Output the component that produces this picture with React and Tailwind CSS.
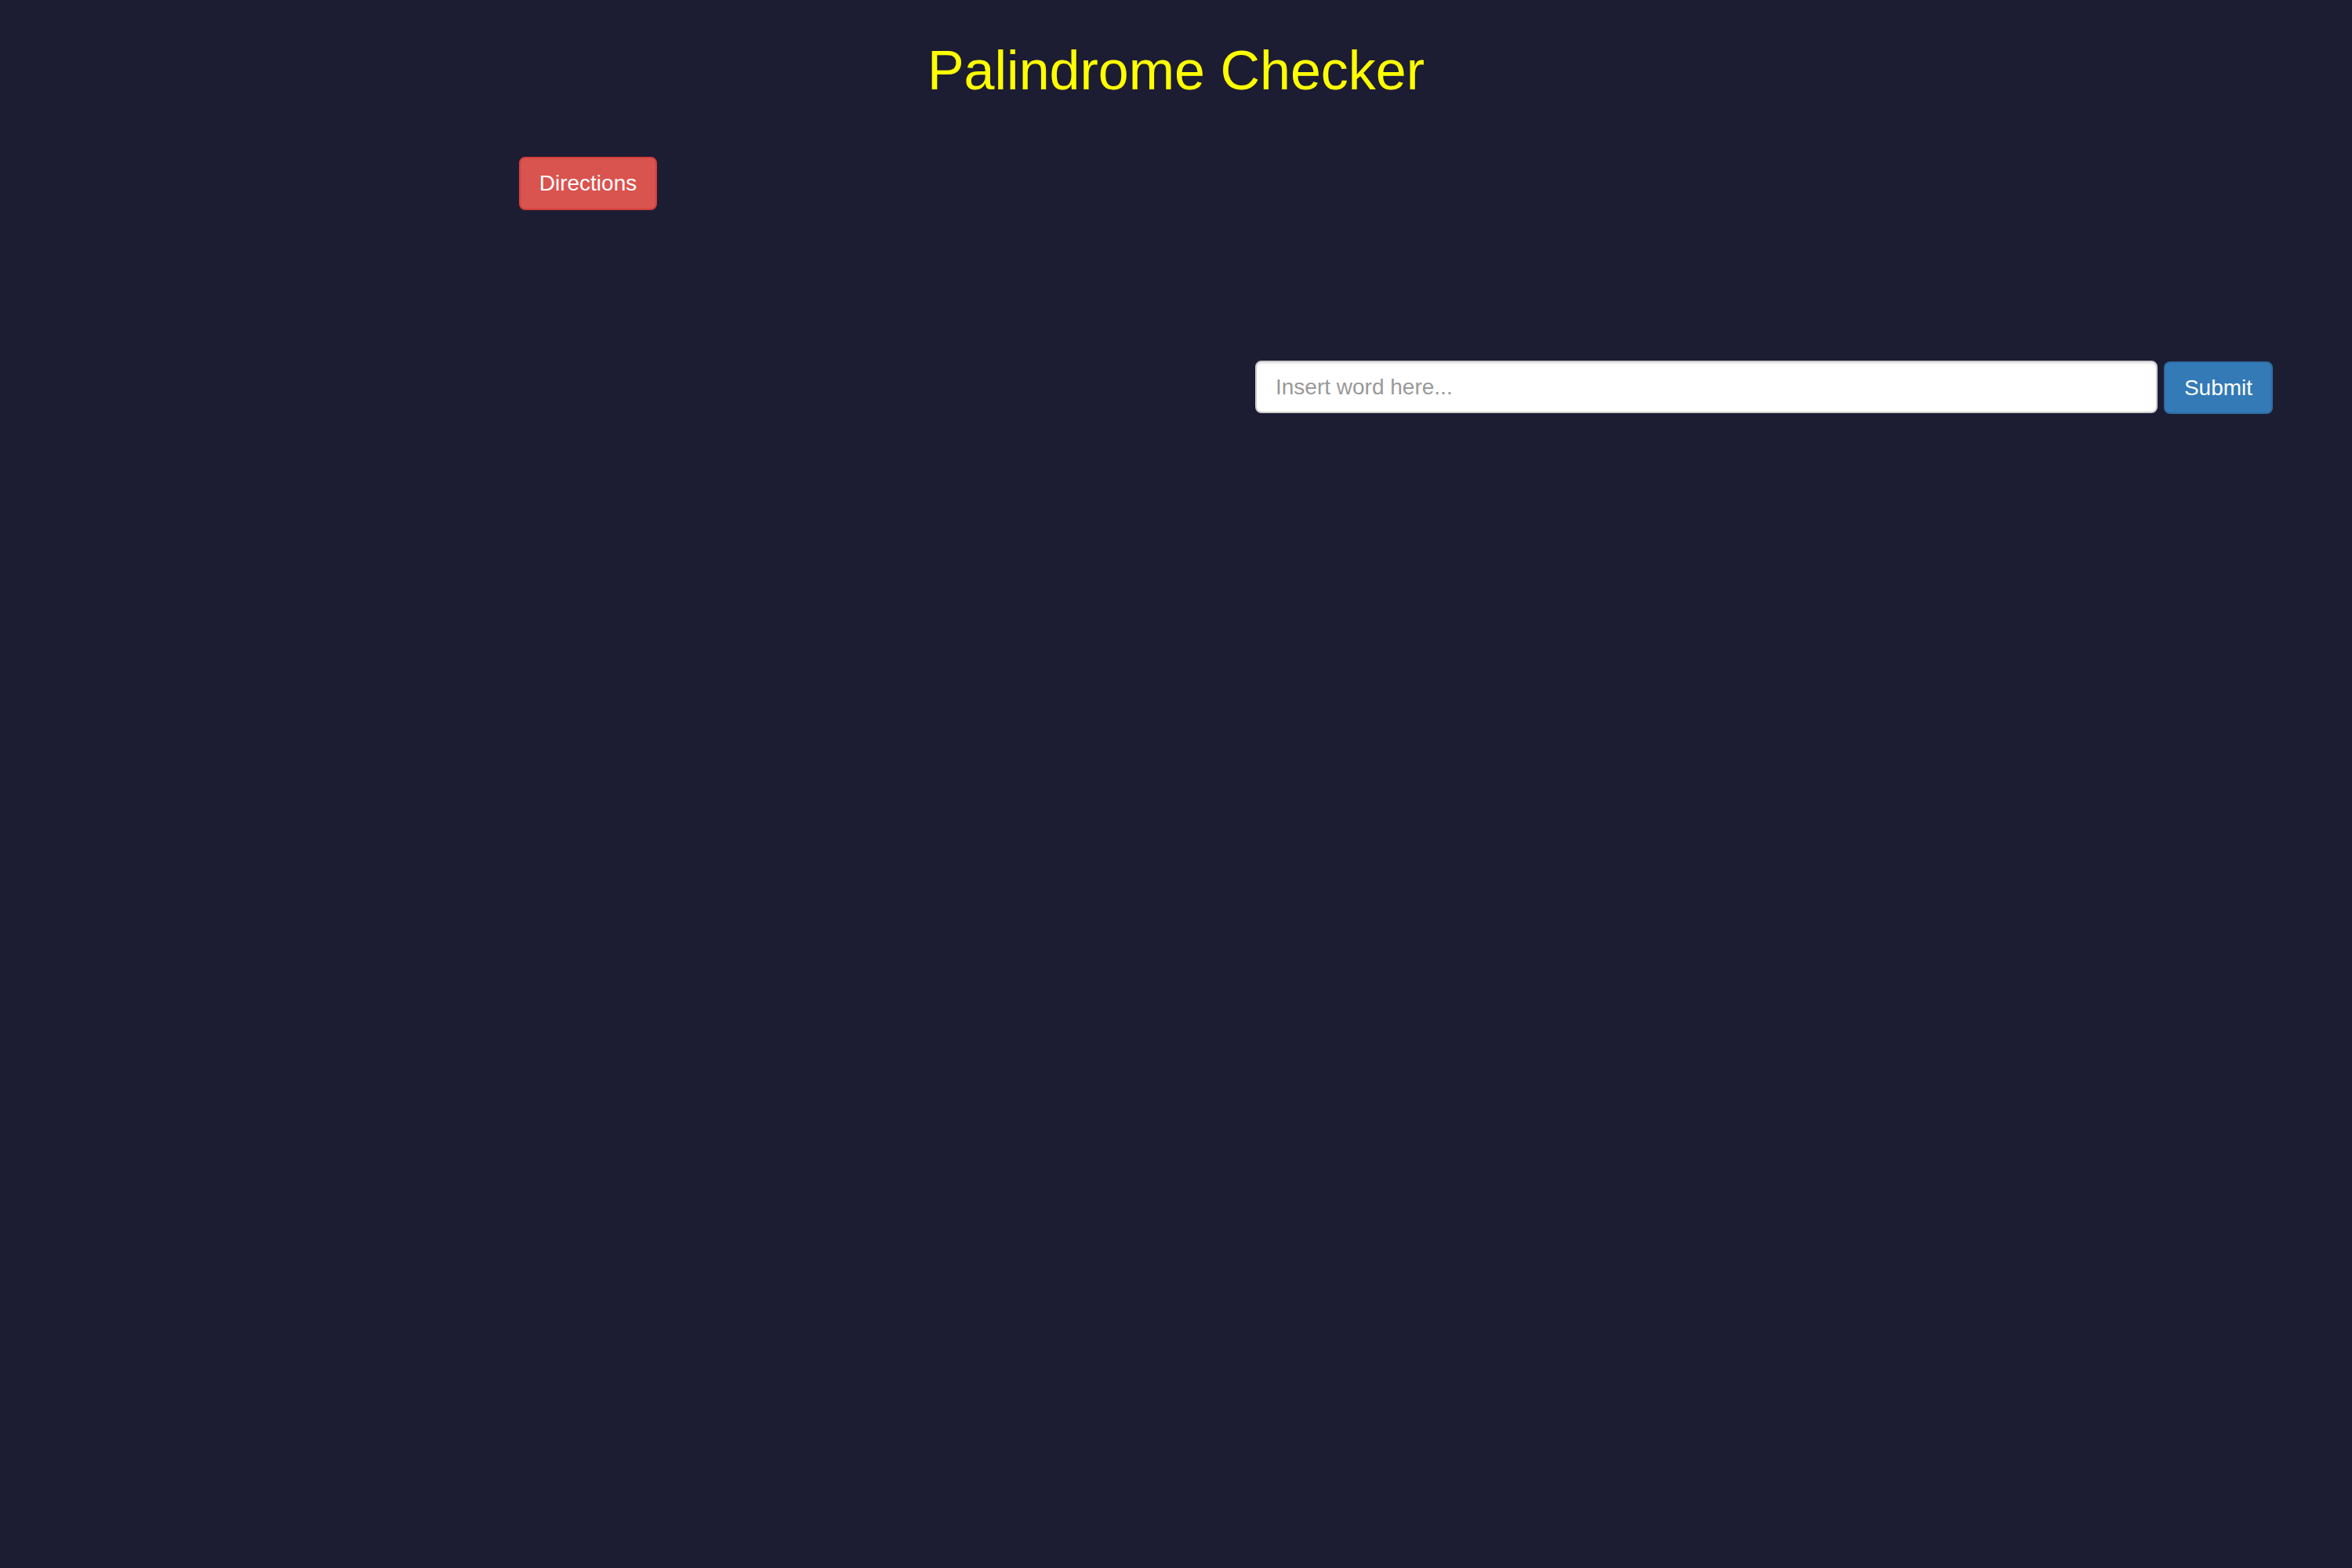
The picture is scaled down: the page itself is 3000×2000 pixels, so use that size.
import React from 'react';

const App = () => {
  return (
    <div className="min-h-screen w-full bg-[#1c1d33] font-['Liberation_Sans',Arial,sans-serif]">
      {/* Header */}
      <h1 className="pt-[52px] text-center text-[70px] leading-[77px] font-normal text-[#ffff00]">
        Palindrome Checker
      </h1>

      <div className="mt-[71px] pl-[662px]">
        <button className="h-[68px] w-[176px] rounded-[8px] border-2 border-[#d43f3a] bg-[#d9534f] text-[28px] leading-[40px] text-white">
          Directions
        </button>
      </div>

      {/* Form */}
      <div className="mt-[192px] flex items-start justify-end gap-[8px] pr-[101px]">
        <input
          type="text"
          placeholder="Insert word here..."
          className="h-[67px] w-[1151px] rounded-[8px] border-2 border-[#cccccc] bg-white px-[24px] text-[28px] text-[#555] shadow-[inset_0_2px_2px_rgba(0,0,0,0.075)] outline-none placeholder:text-[#999]"
        />
        <button className="mt-[1px] h-[67px] w-[139px] rounded-[8px] border-2 border-[#2e6da4] bg-[#337ab7] text-[28px] leading-[40px] text-white">
          Submit
        </button>
      </div>
    </div>
  );
};

export default App;
